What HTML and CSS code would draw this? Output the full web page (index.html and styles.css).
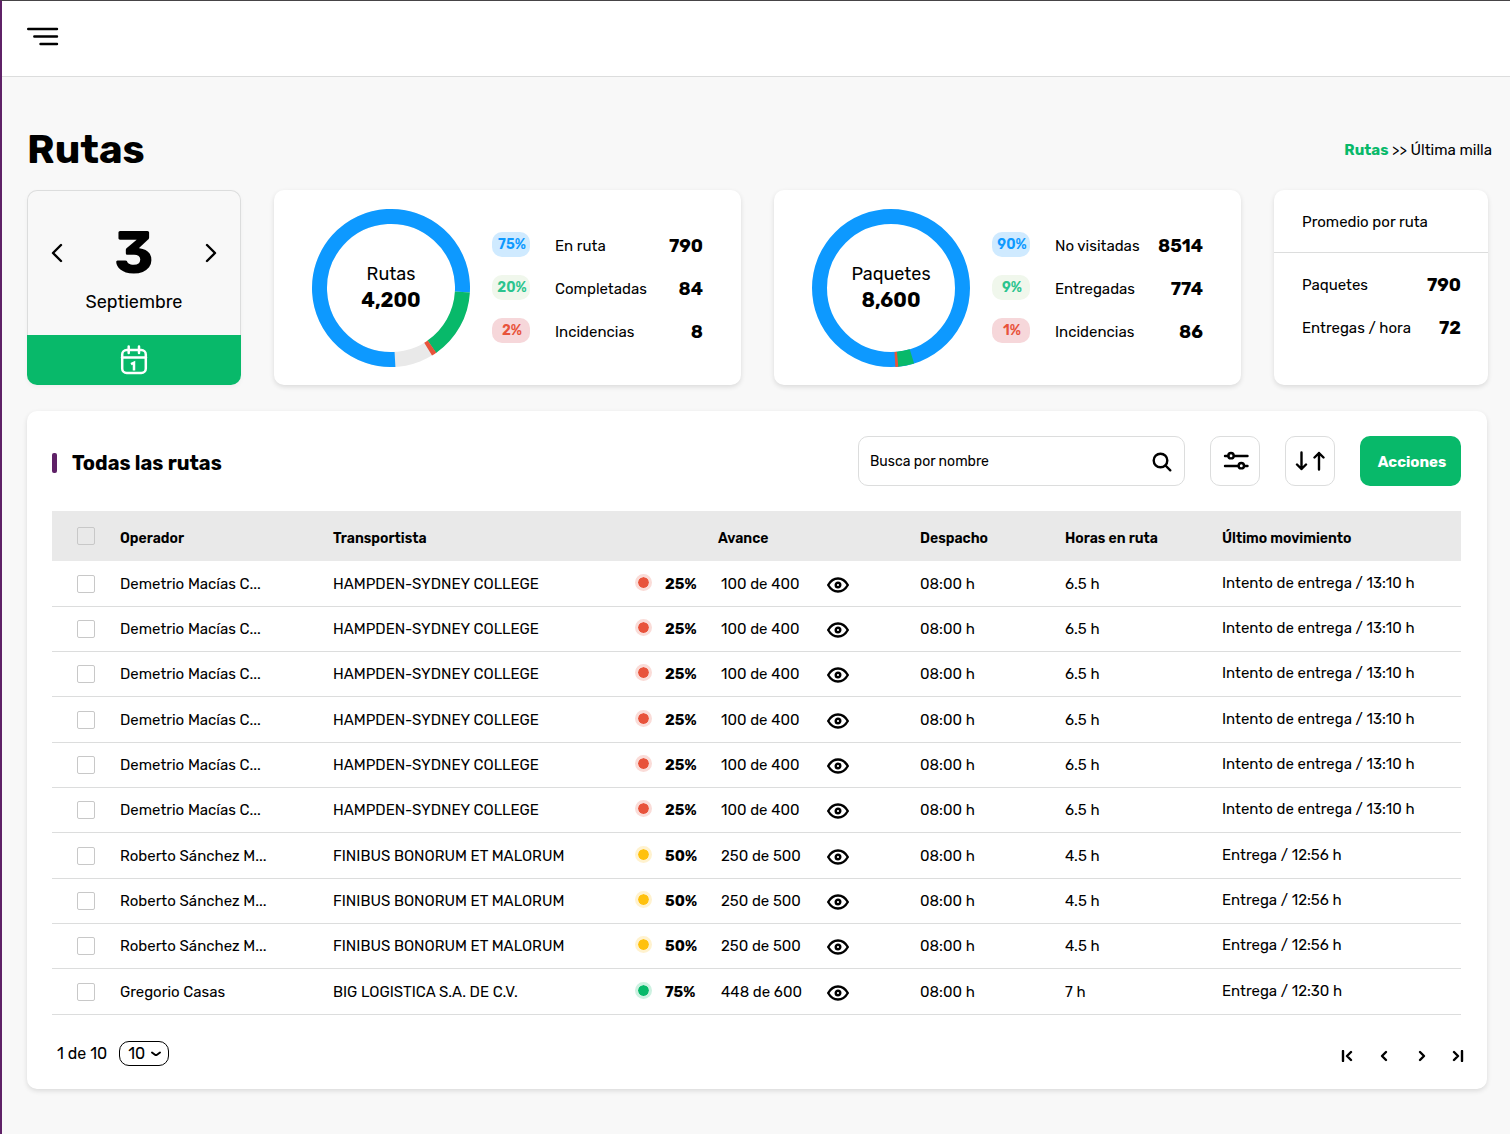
FILE: index.html
```html
<!DOCTYPE html>
<html lang="es">
<head>
<meta charset="utf-8">
<meta name="viewport" content="width=device-width, initial-scale=1">
<title>Rutas</title>
<link rel="stylesheet" href="styles.css">
</head>
<body>
<svg class="sprite" aria-hidden="true">
  <symbol id="eye" viewBox="0 0 22 16"><path d="M1.2 8C3.6 3.8 7 1.5 11 1.5S18.4 3.8 20.8 8C18.4 12.2 15 14.5 11 14.5S3.6 12.2 1.2 8Z"/><circle cx="11" cy="8" r="2.3"/></symbol>
</svg>
<div class="app">
  <header class="topbar">
    <button class="icon-btn" type="button" aria-label="Menú">
      <svg class="line" width="32" height="20" viewBox="0 0 32 20"><path d="M1.2 2H30M7.300 9.500H30M13.500 17H30"/></svg>
    </button>
  </header>

  <main class="main">
    <div class="title-row">
      <h1 class="title">Rutas</h1>
      <nav class="crumbs"><a class="crumb-link" href="#">Rutas</a> &gt;&gt; Última milla</nav>
    </div>

    <section class="cards">
      <div class="date-card">
        <div class="date-body">
          <button class="icon-btn" type="button" aria-label="Día anterior"><svg class="line" width="12" height="20" viewBox="0 0 12 20"><path d="M10 2L2 10L10 18"/></svg></button>
          <div class="date-text"><span class="day">3</span><span class="month">Septiembre</span></div>
          <button class="icon-btn" type="button" aria-label="Día siguiente"><svg class="line" width="12" height="20" viewBox="0 0 12 20"><path d="M2 2L10 10L2 18"/></svg></button>
        </div>
        <button class="date-open" type="button" aria-label="Abrir calendario">
          <svg width="28" height="30" viewBox="0 0 28 30"><rect x="2.200" y="5" width="23.600" height="23" rx="4.500"/><path d="M2 12.500H26M8.700 1.500V8M19 1.500V8"/><path class="one" d="M11 19.200L14 17.700V25.500"/></svg>
        </button>
      </div>

      <article class="card stat">
        <div class="donut">
          <svg class="ring" viewBox="0 0 158 158" aria-hidden="true">
            <circle class="seg rest" cx="79" cy="79" r="71.500"/>
            <circle class="seg blue" cx="79" cy="79" r="71.500" pathLength="360" stroke-dasharray="276.500 360" transform="rotate(86.800 79 79)"/>
            <circle class="seg green" cx="79" cy="79" r="71.500" pathLength="360" stroke-dasharray="52 360" transform="rotate(3.200 79 79)"/>
            <circle class="seg red" cx="79" cy="79" r="71.500" pathLength="360" stroke-dasharray="3.800 360" transform="rotate(55 79 79)"/>
          </svg>
          <div class="donut-text"><span class="donut-label">Rutas</span><strong class="donut-total">4,200</strong></div>
        </div>
        <ul class="legend">
          <li><span class="badge b-blue">75%</span><span class="name">En ruta</span><strong class="num">790</strong></li>
          <li><span class="badge b-green">20%</span><span class="name">Completadas</span><strong class="num">84</strong></li>
          <li><span class="badge b-red">2%</span><span class="name">Incidencias</span><strong class="num">8</strong></li>
        </ul>
      </article>

      <article class="card stat">
        <div class="donut">
          <svg class="ring" viewBox="0 0 158 158" aria-hidden="true">
            <circle class="seg blue" cx="79" cy="79" r="71.500"/>
            <circle class="seg green" cx="79" cy="79" r="71.500" pathLength="360" stroke-dasharray="12 360" transform="rotate(73 79 79)"/>
            <circle class="seg red" cx="79" cy="79" r="71.500" pathLength="360" stroke-dasharray="2.200 360" transform="rotate(84.700 79 79)"/>
          </svg>
          <div class="donut-text"><span class="donut-label">Paquetes</span><strong class="donut-total">8,600</strong></div>
        </div>
        <ul class="legend">
          <li><span class="badge b-blue">90%</span><span class="name">No visitadas</span><strong class="num">8514</strong></li>
          <li><span class="badge b-green">9%</span><span class="name">Entregadas</span><strong class="num">774</strong></li>
          <li><span class="badge b-red">1%</span><span class="name">Incidencias</span><strong class="num">86</strong></li>
        </ul>
      </article>

      <article class="card average">
        <h2 class="average-title">Promedio por ruta</h2>
        <ul class="legend average-list">
          <li><span class="name">Paquetes</span><strong class="num">790</strong></li>
          <li><span class="name">Entregas / hora</span><strong class="num">72</strong></li>
        </ul>
      </article>
    </section>

    <section class="card panel">
      <div class="toolbar">
        <h2 class="panel-title">Todas las rutas</h2>
        <form class="search">
          <input class="search-input" type="search" placeholder="Busca por nombre" aria-label="Busca por nombre">
          <button class="icon-btn" type="button" aria-label="Buscar"><svg class="line" width="20" height="20" viewBox="0 0 20 20"><circle cx="8.500" cy="8.500" r="6.800"/><path d="M13.500 13.500L18.300 18.300"/></svg></button>
        </form>
        <button class="tool" type="button" aria-label="Filtros"><svg class="line" width="28" height="20" viewBox="0 0 28 20"><path d="M4 5H7.500M13 5H26.500M4 15H17.500M23 15H26.500"/><circle cx="10" cy="4.700" r="2.700"/><circle cx="20.300" cy="14.700" r="2.700"/></svg></button>
        <button class="tool" type="button" aria-label="Ordenar"><svg class="line" width="30" height="20" viewBox="0 0 30 20"><path d="M6.500 1.500V18M2 13.500L6.500 18L11 13.500M24 18.500V2M19.500 6.500L24 2L28.500 6.500"/></svg></button>
        <button class="primary" type="button">Acciones</button>
      </div>

      <table class="routes">
        <colgroup><col class="c-check"><col class="c-op"><col class="c-carrier"><col class="c-pct"><col class="c-count"><col class="c-view"><col class="c-time"><col class="c-hours"><col></colgroup>
        <thead>
          <tr><th class="check"><input class="box" type="checkbox" aria-label="Seleccionar todas"></th><th>Operador</th><th>Transportista</th><th class="progress-head" colspan="3">Avance</th><th>Despacho</th><th>Horas en ruta</th><th>Último movimiento</th></tr>
        </thead>
        <tbody>
          <tr><td class="check"><input class="box" type="checkbox" aria-label="Seleccionar ruta 1"></td><td>Demetrio Macías C...</td><td>HAMPDEN-SYDNEY COLLEGE</td><td><span class="pct"><i class="dot d-red"></i>25%</span></td><td>100 de 400</td><td><button class="icon-btn" type="button" aria-label="Ver ruta"><svg class="eye"><use href="#eye"/></svg></button></td><td>08:00 h</td><td>6.5 h</td><td class="last">Intento de entrega / 13:10 h</td></tr>
          <tr><td class="check"><input class="box" type="checkbox" aria-label="Seleccionar ruta 2"></td><td>Demetrio Macías C...</td><td>HAMPDEN-SYDNEY COLLEGE</td><td><span class="pct"><i class="dot d-red"></i>25%</span></td><td>100 de 400</td><td><button class="icon-btn" type="button" aria-label="Ver ruta"><svg class="eye"><use href="#eye"/></svg></button></td><td>08:00 h</td><td>6.5 h</td><td class="last">Intento de entrega / 13:10 h</td></tr>
          <tr><td class="check"><input class="box" type="checkbox" aria-label="Seleccionar ruta 3"></td><td>Demetrio Macías C...</td><td>HAMPDEN-SYDNEY COLLEGE</td><td><span class="pct"><i class="dot d-red"></i>25%</span></td><td>100 de 400</td><td><button class="icon-btn" type="button" aria-label="Ver ruta"><svg class="eye"><use href="#eye"/></svg></button></td><td>08:00 h</td><td>6.5 h</td><td class="last">Intento de entrega / 13:10 h</td></tr>
          <tr><td class="check"><input class="box" type="checkbox" aria-label="Seleccionar ruta 4"></td><td>Demetrio Macías C...</td><td>HAMPDEN-SYDNEY COLLEGE</td><td><span class="pct"><i class="dot d-red"></i>25%</span></td><td>100 de 400</td><td><button class="icon-btn" type="button" aria-label="Ver ruta"><svg class="eye"><use href="#eye"/></svg></button></td><td>08:00 h</td><td>6.5 h</td><td class="last">Intento de entrega / 13:10 h</td></tr>
          <tr><td class="check"><input class="box" type="checkbox" aria-label="Seleccionar ruta 5"></td><td>Demetrio Macías C...</td><td>HAMPDEN-SYDNEY COLLEGE</td><td><span class="pct"><i class="dot d-red"></i>25%</span></td><td>100 de 400</td><td><button class="icon-btn" type="button" aria-label="Ver ruta"><svg class="eye"><use href="#eye"/></svg></button></td><td>08:00 h</td><td>6.5 h</td><td class="last">Intento de entrega / 13:10 h</td></tr>
          <tr><td class="check"><input class="box" type="checkbox" aria-label="Seleccionar ruta 6"></td><td>Demetrio Macías C...</td><td>HAMPDEN-SYDNEY COLLEGE</td><td><span class="pct"><i class="dot d-red"></i>25%</span></td><td>100 de 400</td><td><button class="icon-btn" type="button" aria-label="Ver ruta"><svg class="eye"><use href="#eye"/></svg></button></td><td>08:00 h</td><td>6.5 h</td><td class="last">Intento de entrega / 13:10 h</td></tr>
          <tr><td class="check"><input class="box" type="checkbox" aria-label="Seleccionar ruta 7"></td><td>Roberto Sánchez M...</td><td>FINIBUS BONORUM ET MALORUM</td><td><span class="pct"><i class="dot d-amber"></i>50%</span></td><td>250 de 500</td><td><button class="icon-btn" type="button" aria-label="Ver ruta"><svg class="eye"><use href="#eye"/></svg></button></td><td>08:00 h</td><td>4.5 h</td><td class="last">Entrega / 12:56 h</td></tr>
          <tr><td class="check"><input class="box" type="checkbox" aria-label="Seleccionar ruta 8"></td><td>Roberto Sánchez M...</td><td>FINIBUS BONORUM ET MALORUM</td><td><span class="pct"><i class="dot d-amber"></i>50%</span></td><td>250 de 500</td><td><button class="icon-btn" type="button" aria-label="Ver ruta"><svg class="eye"><use href="#eye"/></svg></button></td><td>08:00 h</td><td>4.5 h</td><td class="last">Entrega / 12:56 h</td></tr>
          <tr><td class="check"><input class="box" type="checkbox" aria-label="Seleccionar ruta 9"></td><td>Roberto Sánchez M...</td><td>FINIBUS BONORUM ET MALORUM</td><td><span class="pct"><i class="dot d-amber"></i>50%</span></td><td>250 de 500</td><td><button class="icon-btn" type="button" aria-label="Ver ruta"><svg class="eye"><use href="#eye"/></svg></button></td><td>08:00 h</td><td>4.5 h</td><td class="last">Entrega / 12:56 h</td></tr>
          <tr><td class="check"><input class="box" type="checkbox" aria-label="Seleccionar ruta 10"></td><td>Gregorio Casas</td><td>BIG LOGISTICA S.A. DE C.V.</td><td><span class="pct"><i class="dot d-green"></i>75%</span></td><td>448 de 600</td><td><button class="icon-btn" type="button" aria-label="Ver ruta"><svg class="eye"><use href="#eye"/></svg></button></td><td>08:00 h</td><td>7 h</td><td class="last">Entrega / 12:30 h</td></tr>
        </tbody>
      </table>

      <footer class="table-foot">
        <label class="page-size" for="size">1 de 10</label>
        <div class="select-wrap">
          <select class="select" id="size"><option>10</option><option>25</option><option>50</option></select>
          <svg class="caret" width="12" height="8" viewBox="0 0 12 8"><path d="M2 2.500L5 4.700Q6 5.400 7 4.700L10 2.500"/></svg>
        </div>
        <nav class="pager" aria-label="Páginas">
          <button class="icon-btn" type="button" aria-label="Primera"><svg class="line" width="12" height="12" viewBox="0 0 12 12"><path d="M2 1V11M10 2L6 6L10 10"/></svg></button>
          <button class="icon-btn" type="button" aria-label="Anterior"><svg class="line" width="12" height="12" viewBox="0 0 12 12"><path d="M8 2L4 6L8 10"/></svg></button>
          <button class="icon-btn" type="button" aria-label="Siguiente"><svg class="line" width="12" height="12" viewBox="0 0 12 12"><path d="M5 2L9 6L5 10"/></svg></button>
          <button class="icon-btn" type="button" aria-label="Última"><svg class="line" width="12" height="12" viewBox="0 0 12 12"><path d="M2 2L6 6L2 10M10 1V11"/></svg></button>
        </nav>
      </footer>
    </section>
  </main>
</div>
</body>
</html>
```
FILE: styles.css
```css
:root {
  --green: #08b96a;
  --blue: #0d99ff;
  --red: #e8533b;
  --amber: #ffc10d;
  --purple: #5f2167;
  --line: #dcdddd;
  --page: #f8f8f8;
}
* { box-sizing: border-box; }
body {
  margin: 0;
  background: var(--page);
  color: #000;
  font: 400 15px/20px Rubik, Inter, sans-serif;
}
button, input, select { font: inherit; color: inherit; }
h1, h2, ul { margin: 0; padding: 0; }
ul { list-style: none; }
.sprite { display: none; }
.app {
  min-height: 100vh;
  border-top: 1px solid #464446;
  border-left: 2px solid var(--purple);
}
.icon-btn {
  display: inline-flex;
  padding: 0;
  border: 0;
  background: none;
  vertical-align: middle;
  cursor: pointer;
}
.line, .eye {
  fill: none;
  stroke: #000;
  stroke-width: 2.4px;
  stroke-linecap: round;
  stroke-linejoin: round;
}
.topbar {
  display: flex;
  align-items: center;
  height: 76px;
  padding: 0 25px 4px;
  background: #fff;
  border-bottom: 1px solid var(--line);
}
.main { padding: 49px 22px 44px 25px; }

.title-row {
  display: flex;
  align-items: center;
  justify-content: space-between;
  height: 48px;
  margin: 0 -4px 16px 0;
}
.title { font-size: 40px; line-height: 48px; font-weight: 700; }
.crumb-link { color: var(--green); font-weight: 700; text-decoration: none; }

.cards {
  display: grid;
  grid-template-columns: 214px 1fr 1fr 214px;
  gap: 33px;
  margin-bottom: 26px;
}
.card {
  background: #fff;
  border-radius: 10px;
  box-shadow: 0 2px 5px rgba(0, 0, 0, .12);
}
.date-card {
  display: flex;
  flex-direction: column;
  border-radius: 10px;
  box-shadow: 0 2px 5px rgba(0, 0, 0, .04);
}
.date-body {
  flex: 1;
  display: flex;
  align-items: center;
  justify-content: space-between;
  padding: 0 23px 20px;
  border: 1px solid var(--line);
  border-bottom: 0;
  border-radius: 10px 10px 0 0;
}
.date-text {
  display: flex;
  flex-direction: column;
  align-items: center;
  gap: 8px;
  padding-top: 30px;
}
.day { font-size: 60px; line-height: 60px; font-weight: 700; }
.month { font-size: 18px; line-height: 22px; }
.date-open {
  display: grid;
  place-items: center;
  height: 50px;
  padding: 0;
  border: 0;
  border-radius: 0 0 10px 10px;
  background: var(--green);
}
.date-open svg {
  fill: none;
  stroke: #fff;
  stroke-width: 2.5px;
  stroke-linecap: round;
}
.date-open .one { stroke-linecap: butt; }

.stat {
  display: flex;
  align-items: center;
  gap: 22px;
  min-height: 195px;
  padding: 0 38px;
}
.donut { display: grid; width: 158px; height: 158px; }
.ring, .donut-text { grid-area: 1 / 1; }
.seg { fill: none; stroke-width: 15px; }
.rest { stroke: #e9e9e9; }
.blue { stroke: var(--blue); }
.green { stroke: var(--green); }
.red { stroke: var(--red); }
.donut-text {
  display: flex;
  flex-direction: column;
  align-items: center;
  justify-content: center;
  gap: 2px;
  padding-bottom: 2px;
}
.donut-label { font-size: 18px; line-height: 24px; }
.donut-total { font-size: 20px; line-height: 24px; }
.legend { flex: 1; }
.legend li { display: flex; align-items: center; height: 43px; }
.badge {
  width: 38px;
  margin-right: 25px;
  padding: 1px 0 0 2px;
  border-radius: 10px;
  font-size: 14px;
  line-height: 24px;
  font-weight: 600;
  text-align: center;
}
.b-blue { background: #cfeaff; color: var(--blue); }
.b-green { background: #f0f7ec; color: #2bc48e; }
.b-red { background: #f6d7da; color: var(--red); }
.name { flex: 1; white-space: nowrap; }
.num { font-size: 18px; }
.stat .name, .stat .num { padding-top: 2px; }
.average-title {
  padding: 22px 28px 20px;
  border-bottom: 1px solid var(--line);
  font-size: 15px;
  font-weight: 400;
}
.average-list { padding: 10px 27px 0 28px; }

.panel { margin-right: 1px; padding: 25px 26px 23px 25px; }
.toolbar {
  display: flex;
  align-items: center;
  gap: 25px;
  margin-bottom: 25px;
}
.panel-title {
  display: flex;
  align-items: center;
  gap: 15px;
  margin-right: auto;
  padding-top: 4px;
  font-size: 20px;
  font-weight: 700;
}
.panel-title::before {
  content: "";
  width: 5px;
  height: 20px;
  border-radius: 2px;
  background: var(--purple);
}
.search {
  display: flex;
  align-items: center;
  width: 327px;
  height: 50px;
  padding: 2px 12px 0 11px;
  border: 1px solid var(--line);
  border-radius: 10px;
}
.search-input {
  flex: 1;
  min-width: 0;
  padding: 0;
  border: 0;
  outline: 0;
  background: none;
  font-size: 14px;
}
.search-input::placeholder { color: #000; opacity: 1; }
.tool {
  display: grid;
  place-items: center;
  width: 50px;
  height: 50px;
  padding: 0;
  border: 1px solid var(--line);
  border-radius: 10px;
  background: #fff;
}
.primary {
  width: 101px;
  height: 50px;
  padding: 2px 0 0 3px;
  border: 0;
  border-radius: 10px;
  background: var(--green);
  color: #fff;
  font-weight: 700;
}

.routes {
  width: 100%;
  table-layout: fixed;
  border-collapse: separate;
  border-spacing: 0;
}
.c-check { width: 68px; }
.c-op { width: 213px; }
.c-carrier { width: 302px; }
.c-pct { width: 86px; }
.c-count { width: 106px; }
.c-view { width: 93px; }
.c-time { width: 145px; }
.c-hours { width: 157px; }
.routes th {
  height: 50px;
  padding: 5px 0 0;
  background: #e9e9e9;
  font-size: 14px;
  font-weight: 600;
  text-align: left;
}
.routes td {
  height: 45px;
  padding: 0;
  border-bottom: 1px solid var(--line);
  white-space: nowrap;
}
.routes tr:nth-child(3n + 1) td { height: 46px; }
.routes .progress-head { padding-left: 83px; }
.routes .check { padding: 0 0 0 25px; }
.routes .last { padding-bottom: 2px; }
.box {
  display: block;
  width: 18px;
  height: 18px;
  margin: 0;
  appearance: none;
  border: 1px solid #c8c8c8;
  border-radius: 2px;
}
.pct { display: flex; align-items: center; gap: 13px; font-weight: 700; }
.dot {
  width: 17px;
  height: 17px;
  margin-bottom: 3px;
  border: 3px solid;
  border-radius: 50%;
  background-clip: padding-box;
}
.d-red { background-color: var(--red); border-color: #fadcd8; }
.d-amber { background-color: var(--amber); border-color: #fff2cf; }
.d-green { background-color: var(--green); border-color: #cdf1e1; }
.eye { width: 22px; height: 16px; }

.table-foot {
  display: flex;
  align-items: center;
  gap: 12px;
  padding: 26px 0 0 5px;
}
.page-size, .select { font-size: 16px; }
.select-wrap { display: grid; align-items: center; }
.select, .caret { grid-area: 1 / 1; }
.select {
  width: 50px;
  height: 25px;
  padding: 0 8px;
  appearance: none;
  border: 1px solid #000;
  border-radius: 10px;
  background: none;
}
.caret {
  justify-self: end;
  margin-right: 7px;
  fill: none;
  stroke: #000;
  stroke-width: 2px;
  stroke-linecap: round;
  pointer-events: none;
}
.pager { display: flex; gap: 25px; margin: 0 -3px 0 auto; padding-top: 4px; }
```
